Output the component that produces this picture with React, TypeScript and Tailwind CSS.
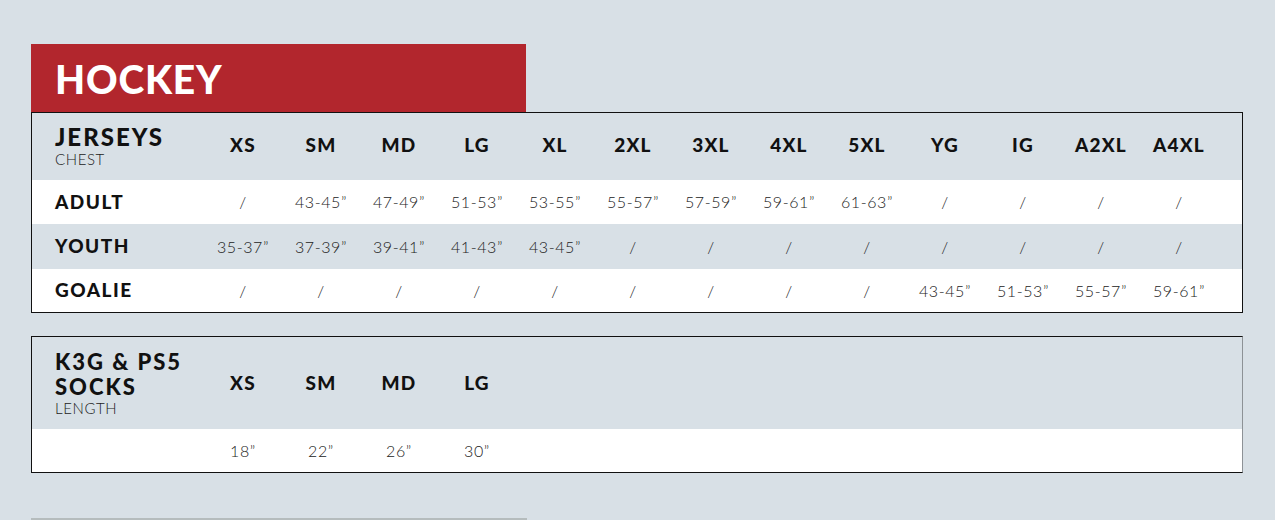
const sizes = ['XS', 'SM', 'MD', 'LG', 'XL', '2XL', '3XL', '4XL', '5XL', 'YG', 'IG', 'A2XL', 'A4XL'];

const jerseyRows = [
  { label: 'ADULT', bg: 'bg-white', h: 'h-[44px]', values: ['/', '43-45”', '47-49”', '51-53”', '53-55”', '55-57”', '57-59”', '59-61”', '61-63”', '/', '/', '/', '/'] },
  { label: 'YOUTH', bg: 'bg-[#d8e0e6]', h: 'h-[45px]', values: ['35-37”', '37-39”', '39-41”', '41-43”', '43-45”', '/', '/', '/', '/', '/', '/', '/', '/'] },
  { label: 'GOALIE', bg: 'bg-white', h: 'h-[43px]', values: ['/', '/', '/', '/', '/', '/', '/', '/', '/', '43-45”', '51-53”', '55-57”', '59-61”'] },
];

const sockSizes = ['XS', 'SM', 'MD', 'LG'];
const sockValues = ['18”', '22”', '26”', '30”'];

const grid = 'grid grid-cols-[149px_repeat(13,78px)] items-center pl-[23px]';

export default function App() {
  return (
    <div className="h-[520px] w-[1275px] overflow-hidden bg-[#d8e0e6] font-['Lato',sans-serif] text-[#111]">
      <div className="pt-[44px] pl-[31px]">
        {/* Title tab */}
        <div className="flex h-[68px] w-[495px] items-center bg-[#b2262d] pl-[24px]">
          <h1 className="pt-[2px] text-[39px] font-black leading-none tracking-[0.8px] text-white">HOCKEY</h1>
        </div>

        {/* Jerseys */}
        <div className="w-[1212px] border border-[#111]">
          <div className={`${grid} h-[67px] bg-[#d8e0e6]`}>
            <div className="flex flex-col pb-[2px]">
              <span className="text-[24px] font-black leading-[26px] tracking-[2px]">JERSEYS</span>
              <span className="text-[15px] font-light leading-[18px] tracking-[0.6px] text-[#222]">CHEST</span>
            </div>
            {sizes.map((s) => (
              <span key={s} className="pb-[3px] text-center text-[19px] font-black tracking-[1.2px]">
                {s}
              </span>
            ))}
          </div>
          {jerseyRows.map((row) => (
            <div key={row.label} className={`${grid} ${row.bg} ${row.h}`}>
              <span className="text-[19px] font-black tracking-[1.5px]">{row.label}</span>
              {row.values.map((v, j) => (
                <span key={j} className="text-center text-[16px] font-light tracking-[0.6px] text-[#222]">
                  {v}
                </span>
              ))}
            </div>
          ))}
        </div>

        {/* Socks */}
        <div className="mt-[23px] w-[1212px] border border-[#111] border-r-[#8d9296]">
          <div className={`${grid} h-[92px] bg-[#d8e0e6]`}>
            <div className="flex flex-col">
              <span className="whitespace-nowrap text-[22px] font-black leading-[25px] tracking-[2px]">K3G &amp; PS5</span>
              <span className="text-[22px] font-black leading-[25px] tracking-[2px]">SOCKS</span>
              <span className="text-[15px] font-light leading-[18px] tracking-[0.6px] text-[#222]">LENGTH</span>
            </div>
            {sockSizes.map((s) => (
              <span key={s} className="text-center text-[19px] font-black tracking-[1.2px]">
                {s}
              </span>
            ))}
          </div>
          <div className={`${grid} h-[43px] bg-white`}>
            <span />
            {sockValues.map((v) => (
              <span key={v} className="text-center text-[16px] font-light tracking-[0.6px] text-[#222]">
                {v}
              </span>
            ))}
          </div>
        </div>

        {/* Next section edge */}
        <div className="mt-[45px] h-[2px] w-[496px] bg-[#b5bcbd]" />
      </div>
    </div>
  );
}
